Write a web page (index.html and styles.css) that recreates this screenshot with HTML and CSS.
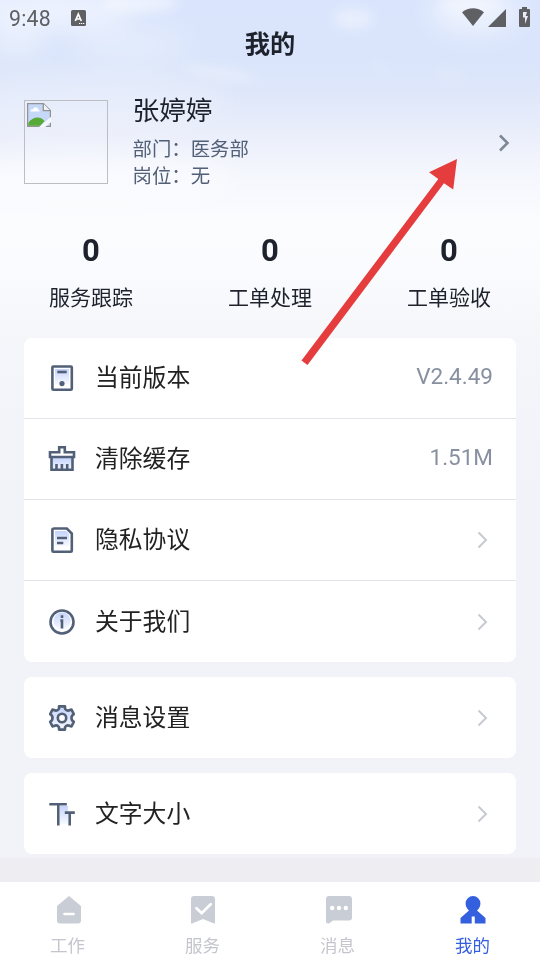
FILE: index.html
```html
<!DOCTYPE html>
<html lang="zh-CN">
<head>
<meta charset="utf-8">
<title>我的</title>
<link rel="stylesheet" href="styles.css">
</head>
<body>
<div class="screen">
  <svg class="sky" width="540" height="340" viewBox="0 0 540 340" aria-hidden="true">
    <defs>
      <linearGradient id="sky" x2="0" y2="1">
        <stop offset="0" stop-color="#dae5fd"/><stop offset=".18" stop-color="#dae5fb"/><stop offset=".28" stop-color="#dfe7fa"/>
        <stop offset=".4" stop-color="#ebeffb"/><stop offset=".5" stop-color="#f4f6fd"/><stop offset=".65" stop-color="#fbfcfe"/>
        <stop offset=".8" stop-color="#fafbfe"/><stop offset="1" stop-color="#f5f6fa"/>
      </linearGradient>
      <filter id="soft" x="-50%" y="-150%" width="200%" height="400%" color-interpolation-filters="sRGB"><feGaussianBlur stdDeviation="13"/></filter>
      <filter id="wisp" x="-50%" y="-150%" width="200%" height="400%" color-interpolation-filters="sRGB"><feGaussianBlur stdDeviation="6"/></filter>
    </defs>
    <rect width="540" height="340" fill="url(#sky)"/>
    <g fill="#fff" filter="url(#soft)">
      <ellipse cx="50" cy="10" rx="85" ry="18" opacity=".55"/>
      <ellipse cx="15" cy="42" rx="30" ry="14" opacity=".4"/>
      <ellipse cx="130" cy="45" rx="60" ry="20" opacity=".25"/>
      <ellipse cx="475" cy="12" rx="45" ry="22" opacity=".5"/>
      <ellipse cx="90" cy="100" rx="140" ry="30" opacity=".22"/>
      <ellipse cx="90" cy="180" rx="150" ry="26" opacity=".45"/>
    </g>
    <g fill="#fff" filter="url(#wisp)">
      <ellipse cx="140" cy="3" rx="38" ry="9" opacity=".5"/>
      <ellipse cx="353" cy="19" rx="20" ry="10" opacity=".4"/>
      <ellipse cx="470" cy="4" rx="32" ry="10" opacity=".3"/>
      <ellipse cx="220" cy="73" rx="38" ry="6" transform="rotate(10 220 73)" opacity=".3"/>
      <ellipse cx="450" cy="74" rx="16" ry="4" transform="rotate(15 450 74)" opacity=".22"/>
      <ellipse cx="382" cy="68" rx="12" ry="3" transform="rotate(35 382 68)" opacity=".2"/>
    </g>
  </svg>

  <header class="status">
    <span class="clock">9:48</span>
    <svg class="keyboard" width="15" height="16" viewBox="0 0 15 16"><rect width="15" height="16" rx="1.5" fill="#5f6064"/><path d="M4.3 11 7.3 4.2 10.3 11M5.2 9H9.4" fill="none" stroke="#fff" stroke-width="1.7"/><path d="M8 13.5h1.3m.7 0h1.3m.7 0h1.3" stroke="#fff" stroke-width="1.1"/></svg>
    <svg class="signals" width="68" height="20" viewBox="0 0 68 20" fill="#5f6064"><path d="M0 5.3C6.500 0 15.500 0 22 5.300L11 19Z"/><path d="M44 2v18H26Z"/><path d="M58 2h2V0h5v2h2q1 0 1 1v16q0 1-1 1H58q-1 0-1-1V3q0-1 1-1Z"/><path d="M61 5v5.500h2v6.500l3-8h-2.300L65 5Z" fill="#e9edf8"/></svg>
  </header>
  <h1 class="title">我的</h1>

  <section class="profile">
    <div class="avatar">
      <svg width="24" height="24" viewBox="0 0 24 24"><path d="M.6.6h15.900L23.400 7.500V23.400H.6Z" fill="#c6d8f8" stroke="#929292" stroke-width="1.300"/><path d="M3.500 8c0-2 2-2 2.500-1.500C7 3 11 4 11 6.500c2 0 2 2 1 2H4Z" fill="#fff"/><path d="M1.300 22.800V20C5 14 13 12.500 17.500 18l-4 4.800Z" fill="#57aa35"/><path d="M12 23.900 24 13.800v5.400L18.200 24Z" fill="#f5f7fd"/><path d="M16.300.6v7.100h7" fill="#f3f3f3" stroke="#929292" stroke-width="1.300"/></svg>
    </div>
    <div class="person">
      <div class="name">张婷婷</div>
      <div class="detail">部门：医务部</div>
      <div class="detail">岗位：无</div>
    </div>
    <svg class="enter" width="12" height="18" viewBox="0 0 12 18"><path d="m2 1.500 7.500 7.500L2 16.500" fill="none" stroke="#7f8897" stroke-width="2.600"/></svg>
  </section>

  <section class="stats">
    <div class="stat"><b>0</b><span>服务跟踪</span></div>
    <div class="stat"><b>0</b><span>工单处理</span></div>
    <div class="stat"><b>0</b><span>工单验收</span></div>
  </section>

  <main class="menu">
    <svg width="0" height="0" class="defs"><defs><linearGradient id="tint" x2="0" y2="1"><stop stop-color="#c5d4fc"/><stop offset="1" stop-color="#f7f9ff"/></linearGradient></defs></svg>
    <div class="card">
      <div class="row">
        <svg class="icon" viewBox="0 0 28 28"><rect x="4.400" y="2.500" width="19.400" height="23.200" rx="1" class="line" fill="#fff"/><path d="M7 5h14v15H7Z" fill="url(#tint)"/><path d="M9.300 8h9.400" class="line"/><circle cx="14" cy="19.600" r="2.600" fill="#526077"/></svg>
        <span class="label">当前版本</span><span class="value">V2.4.49</span>
      </div>
      <div class="row">
        <svg class="icon" viewBox="0 0 28 28"><path d="M3.500 13h21v12h-21Z" fill="url(#tint)"/><path d="M3.500 12v12.700h21V12M8.500 19v5M13.900 19v5M19.200 19v5" class="line"/><path d="M2 12V7.300h9.200V2.200h5.600v5.100H26V12Z" class="line" fill="#fff"/></svg>
        <span class="label">清除缓存</span><span class="value">1.51M</span>
      </div>
      <div class="row">
        <svg class="icon" viewBox="0 0 28 28"><path d="M5.200 2.500h13.600l5 5v17.200q0 1-1 1H5.400q-1 0-1-1V3.500q0-1 1-1Z" class="line" fill="#fff"/><path d="M7 5h11l3 3v12H7Z" fill="url(#tint)"/><path d="M9 12h10M9 17h6.300" class="line"/></svg>
        <span class="label">隐私协议</span><svg class="chevron" viewBox="0 0 12 18"><path d="m1.500 1.500 7.500 7.500-7.500 7.500"/></svg>
      </div>
      <div class="row">
        <svg class="icon" viewBox="0 0 28 28"><circle cx="14" cy="14" r="11.500" fill="#fff" class="line"/><circle cx="14" cy="13" r="8.500" fill="url(#tint)"/><path d="M12.300 12.500h1.700V20.500M14 7.300v2.700" class="line"/></svg>
        <span class="label">关于我们</span><svg class="chevron" viewBox="0 0 12 18"><path d="m1.500 1.500 7.500 7.500-7.500 7.500"/></svg>
      </div>
    </div>
    <div class="card">
      <div class="row">
        <svg class="icon" viewBox="0 0 28 28"><path d="M11 2.400h6v2.400q2 2.800 5 1.200l1.500-.4 2.300 4.600-1.600 1.300q-1.500 2.500 0 5l1.600 1.300-2.300 4.600-1.500-.4q-3-1.600-5 1.200v2.400h-6v-2.400q-2-2.800-5-1.200l-1.500.4-2.300-4.600 1.600-1.300q1.500-2.500 0-5L2.200 10.200l2.300-4.600L6 6q3 1.600 5-1.200Z" fill="url(#tint)" class="line" stroke-linejoin="round"/><circle cx="14" cy="14" r="4.200" fill="#fff" class="line"/></svg>
        <span class="label">消息设置</span><svg class="chevron" viewBox="0 0 12 18"><path d="m1.500 1.500 7.500 7.500-7.500 7.500"/></svg>
      </div>
    </div>
    <div class="card">
      <div class="row">
        <svg class="icon" viewBox="0 0 28 28"><path d="M12 6h8v18h-8Z" fill="url(#tint)"/><path d="M1.300 4.200h17.500M10.300 4.200v21.300M16.800 12.600h10M21.700 12.600v12.900" class="line"/></svg>
        <span class="label">文字大小</span><svg class="chevron" viewBox="0 0 12 18"><path d="m1.500 1.500 7.500 7.500-7.500 7.500"/></svg>
      </div>
    </div>
  </main>

  <nav class="tabs">
    <div class="tab"><svg viewBox="0 0 28 28"><path d="M14 0 26 10v14.500q0 3-3 3H5q-3 0-3-3V10Z" fill="#c9cdd5"/><path d="M9.500 18h9" stroke="#fff" stroke-width="2.600" stroke-linecap="round"/></svg><span>工作</span></div>
    <div class="tab"><svg viewBox="0 0 28 28"><path d="M4 0h18q3 0 3 3v24q0 .8-1 .5L13 23 2 27.500q-1 .3-1-.5V3q0-3 3-3Z" fill="#c9cdd5"/><path d="m6.500 12.200 5.200 5 9-9" fill="none" stroke="#fff" stroke-width="2.700" stroke-linecap="round"/></svg><span>服务</span></div>
    <div class="tab"><svg viewBox="0 0 28 28"><path d="M4 0h20q3 0 3 3v18.500q0 3-3 3H8l-4 3q-3 .6-3-2V3q0-3 3-3Z" fill="#c9cdd5"/><g fill="#fff"><circle cx="7.200" cy="12" r="2.200"/><circle cx="14" cy="12" r="2.200"/><circle cx="20.800" cy="12" r="2.200"/></g></svg><span>消息</span></div>
    <div class="tab active"><svg viewBox="0 0 28 28"><path d="M13 0a7.400 7.400 0 0 1 7.400 7.400q0 4-3.400 7L25.500 22v5.500H14.800v-7h-3.100v7H.5V22L9 14.400Q5.600 11.400 5.600 7.400A7.400 7.400 0 0 1 13 0Z" fill="#345fdf"/></svg><span>我的</span></div>
  </nav>

  <svg class="pointer" width="158" height="209" viewBox="0 0 158 209" aria-hidden="true"><path d="M156 2 128 15.300 137.300 22 .5 203.500 6.500 208 143 26.200 152.200 32.500Z" fill="#e53d3d"/></svg>
</div>
</body>
</html>
```
FILE: styles.css
```css
* { box-sizing: border-box; }
body { margin: 0; font-family: "Noto Sans CJK SC", sans-serif; color: #1d222c; }
.screen { position: relative; isolation: isolate; width: 540px; height: 960px; overflow: hidden; background: linear-gradient(#f5f6fa 330px, #f2f3f9 500px 858px, #eeedf2 858px); display: flex; flex-direction: column; }
.sky { position: absolute; top: 0; left: 0; z-index: -1; }
.status { display: flex; align-items: flex-start; height: 26px; padding: 8px 10px 0 9px; color: #5f6064; }
.clock { width: 62px; font: 21.3px/22px Roboto, sans-serif; letter-spacing: .2px; }
.keyboard { margin-top: 2px; }
.signals { margin-left: auto; margin-top: -1px; }
.title { margin: 0; height: 32px; font-size: 25.300px; line-height: 32px; font-weight: 700; text-align: center; }
.profile { display: flex; margin-top: 34px; height: 100px; padding: 0 30px 0 24px; }
.avatar { width: 84px; height: 84px; margin-top: 8px; padding: 2px; border: 1px solid #bdbec2; }
.avatar svg { display: block; }
.person { margin-left: 24.500px; margin-top: -1px; }
.name { font-size: 26.700px; line-height: 36px; margin-bottom: 7px; }
.detail { font-size: 19.400px; line-height: 27px; color: #526077; }
.enter { margin: 42px 0 0 auto; }
.stats { display: flex; justify-content: space-between; height: 146px; padding: 40px 31px 0; }
.stat { width: 120px; text-align: center; }
.stat b { display: block; font: 700 31px/38px Roboto, sans-serif; }
.stat span { display: block; margin-top: 11px; font-size: 21px; line-height: 30px; }
.menu { display: flex; flex-direction: column; gap: 15px; height: 544px; padding: 0 24px; }
.defs { position: absolute; }
.card { background: #fff; border-radius: 8px; }
.row { display: flex; align-items: center; height: 81px; padding: 0 23px 0 24px; }
.row:not(:last-child) { border-bottom: 1px solid #e2e4e9; }
.icon { width: 28px; height: 28px; }
.line { stroke: #526077; stroke-width: 2.600; }
path.line:not([fill]) { fill: none; }
.label { margin-left: 19px; margin-top: -3px; font-size: 23.800px; line-height: 36px; color: #222; }
.row:not(:last-child) .label { margin-top: -4px; }
.value { margin: -4px 0 0 auto; font: 22.500px/30px Roboto, sans-serif; color: #8790a0; }
.chevron { width: 12px; height: 18px; margin: 0 4px 0 auto; fill: none; stroke: #c8cad2; stroke-width: 2; }
.tabs { display: flex; flex: 1; background: #fff; }
.tab { flex: 1; display: flex; flex-direction: column; align-items: center; padding-top: 14px; color: #c5c6cd; font-size: 17.500px; line-height: 26px; }
.tab svg { width: 28px; height: 28px; margin-left: 3px; }
.tab span { margin-top: 8px; }
.tab.active { color: #345fdf; }
.pointer { position: absolute; left: 301px; top: 157px; }
```
